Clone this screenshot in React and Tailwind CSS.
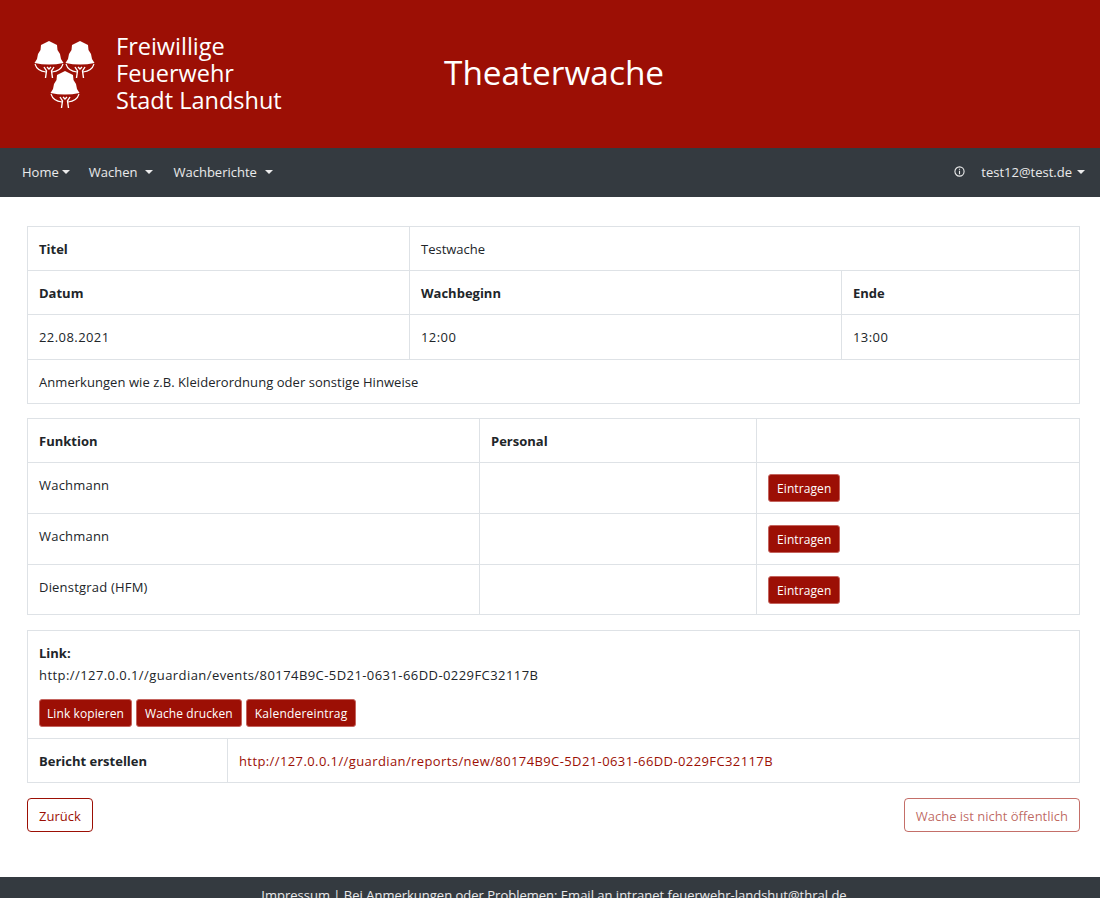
const RED = 'bg-[#9c0f05]'

function Shield({ x, y }) {
  return (
    <g transform={`translate(${x} ${y})`}>
      <path d="M14 0 L22 4 L22.5 9 L25 13 L26 18 L28.5 22 Q14 25 -0.5 22 L2 18 L3 13 L5.5 9 L6 4 Z" fill="#fff" />
      <path d="M0 23 Q2 30 11 31 M28 23 Q26 30 17 31" fill="none" stroke="#fff" strokeWidth="1.1" />
      <path d="M9 26 L11.5 30 L10.5 37 M19 26 L16.5 30 L17.5 37 M12 26 L14 28 L16 26" fill="none" stroke="#fff" strokeWidth="1.4" />
    </g>
  )
}

function Logo() {
  return (
    <div className="flex items-center w-[284px] shrink-0">
      <svg viewBox="0 0 64 72" className="w-[64px] h-[72px] ml-[33px] mt-[4px] shrink-0">
        <Shield x={2} y={1} />
        <Shield x={33} y={1} />
        <Shield x={18} y={31} />
      </svg>
      <div className="ml-[19px] mb-[2px] text-[23.5px] leading-[27px] font-medium text-white font-['Open_Sans',sans-serif]">
        <div>Freiwillige</div>
        <div>Feuerwehr</div>
        <div className="whitespace-nowrap">Stadt Landshut</div>
      </div>
    </div>
  )
}

function Caret({ className = '' }) {
  return <span className={`inline-block w-0 h-0 border-x-[4px] border-x-transparent border-t-[4px] border-t-current ${className}`} />
}

function Btn({ children, className = 'px-2' }) {
  return (
    <button className={`${RED} text-white text-[12px] leading-[18px] tracking-[0.1px] pt-[5px] pb-[3px] h-[28px] rounded-[3px] border border-[#c4645e] whitespace-nowrap ${className}`}>
      {children}
    </button>
  )
}

const cell = 'border border-[#dee2e6] px-[11px] align-middle'
const digits = 'tracking-[0.43px]'

function Slot({ name, height }) {
  return (
    <tr className={height}>
      <td className={`${cell} align-top pt-[12px] tracking-[0.2px]`}>{name}</td>
      <td className={cell}></td>
      <td className={cell}><Btn className="px-[8px]">Eintragen</Btn></td>
    </tr>
  )
}

export default function App() {
  return (
    <div className="h-[898px] overflow-hidden bg-white text-[13px] leading-[20px] text-[#212529] font-['Open_Sans',sans-serif]">
      <header className={`${RED} h-[148px] flex items-center`}>
        <Logo />
        <h1 className="ml-[160px] mb-[4px] text-[33.4px] leading-[42px] text-white">Theaterwache</h1>
      </header>

      <nav className="h-[49px] bg-[#343a40] flex items-center justify-between pl-[22px] pr-[15px] pb-[2px] text-white/90">
        <div className="flex items-center">
          <span className="flex items-center gap-[3px]">Home <Caret /></span>
          <span className="flex items-center gap-[8px] ml-[19px]">Wachen <Caret /></span>
          <span className="flex items-center gap-[8px] ml-[20px]">Wachberichte <Caret /></span>
        </div>
        <div className="flex items-center">
          <svg viewBox="0 0 12 12" className="w-[11px] h-[11px]" fill="none" stroke="currentColor" strokeWidth="1.2">
            <circle cx="6" cy="6" r="5" />
            <path d="M6 3v1M6 5.2V9" />
          </svg>
          <span className="ml-[16px]">test12@test.de</span>
          <Caret className="ml-[5px]" />
        </div>
      </nav>

      <main className="pl-[27px] pr-[20px] pt-[29px]">
        <table className="w-full table-fixed border-collapse">
          <colgroup>
            <col className="w-[382px]" />
            <col className="w-[432px]" />
            <col />
          </colgroup>
          <tbody>
            <tr className="h-[44px]">
              <td className={`${cell} font-bold`}>Titel</td>
              <td className={cell} colSpan={2}>Testwache</td>
            </tr>
            <tr className="h-[44px]">
              <td className={`${cell} font-bold`}>Datum</td>
              <td className={`${cell} font-bold`}>Wachbeginn</td>
              <td className={`${cell} font-bold`}>Ende</td>
            </tr>
            <tr className="h-[45px]">
              <td className={`${cell} ${digits}`}>22.08.2021</td>
              <td className={`${cell} ${digits}`}>12:00</td>
              <td className={`${cell} ${digits}`}>13:00</td>
            </tr>
            <tr className="h-[44px]">
              <td className={`${cell} tracking-[0.05px]`} colSpan={3}>Anmerkungen wie z.B. Kleiderordnung oder sonstige Hinweise</td>
            </tr>
          </tbody>
        </table>

        <table className="w-full table-fixed border-collapse mt-[14px]">
          <colgroup>
            <col className="w-[452px]" />
            <col className="w-[277px]" />
            <col />
          </colgroup>
          <tbody>
            <tr className="h-[44px]">
              <td className={`${cell} font-bold`}>Funktion</td>
              <td className={`${cell} font-bold`}>Personal</td>
              <td className={cell}></td>
            </tr>
            <Slot name="Wachmann" height="h-[51px]" />
            <Slot name="Wachmann" height="h-[51px]" />
            <Slot name="Dienstgrad (HFM)" height="h-[50px]" />
          </tbody>
        </table>

        <table className="w-full table-fixed border-collapse mt-[15px]">
          <colgroup>
            <col className="w-[200px]" />
            <col />
          </colgroup>
          <tbody>
            <tr className="h-[108px]">
              <td className={`${cell} align-top pt-[12px]`} colSpan={2}>
                <div className="font-bold">Link:</div>
                <div className={`mt-[2px] ${digits}`}>http://127.0.0.1//guardian/events/80174B9C-5D21-0631-66DD-0229FC32117B</div>
                <div className="flex gap-[4px] mt-[14px]">
                  <Btn className="px-[7px]">Link kopieren</Btn>
                  <Btn>Wache drucken</Btn>
                  <Btn className="px-[8px] tracking-[0.2px]">Kalendereintrag</Btn>
                </div>
              </td>
            </tr>
            <tr className="h-[44px]">
              <td className={`${cell} font-bold`}>Bericht erstellen</td>
              <td className={`${cell} tracking-[0.4px] text-[#9c0f05]`}>http://127.0.0.1//guardian/reports/new/80174B9C-5D21-0631-66DD-0229FC32117B</td>
            </tr>
          </tbody>
        </table>

        <div className="flex justify-between mt-[15px]">
          <button className="h-[34px] px-[11px] pt-[1px] rounded-[4px] border border-[#9c0f05] text-[#9c0f05]">Zurück</button>
          <button className="h-[34px] px-[11px] pt-[1px] rounded-[4px] border border-[#9c0f05]/60 text-[#9c0f05]/65">Wache ist nicht öffentlich</button>
        </div>
      </main>

      <footer className="mt-[45px] h-[50px] bg-[#343a40] text-white/90 text-center pt-[8px] pl-[8px]">
        Impressum | Bei Anmerkungen oder Problemen: Email an intranet.feuerwehr-landshut@thral.de
      </footer>
    </div>
  )
}
